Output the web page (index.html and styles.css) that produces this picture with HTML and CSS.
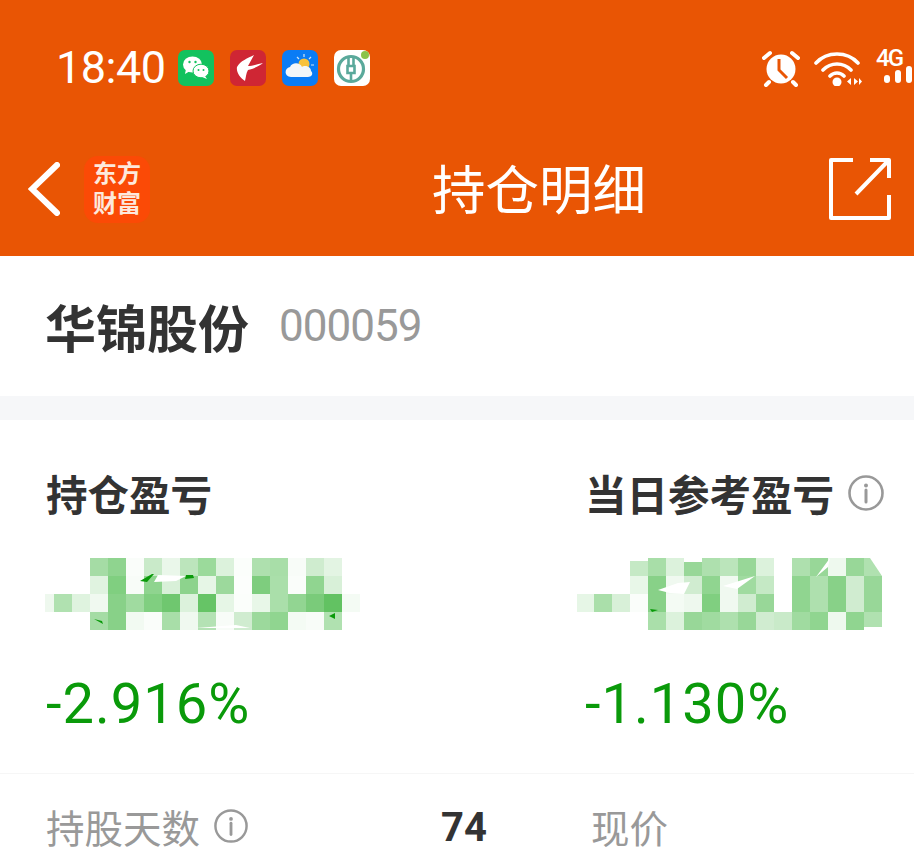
FILE: index.html
```html
<!DOCTYPE html>
<html lang="zh-CN">
<head>
  <meta charset="UTF-8">
  <meta name="viewport" content="width=device-width, initial-scale=1.0">
  <title>持仓明细</title>
  <link rel="stylesheet" href="styles.css">
</head>
<body>
  <div class="header">
    <div class="status-bar">
      <span class="time">18:40</span>
      <div class="notify-icons">
        <svg class="app-icon" viewBox="0 0 36 36"><rect width="36" height="36" rx="7" fill="#12c25e"/><ellipse cx="14.5" cy="14.5" rx="9.5" ry="8" fill="#fff"/><path d="M8 19l-1 5 5-3z" fill="#fff"/><ellipse cx="23" cy="21" rx="8" ry="6.8" fill="#fff" stroke="#12c25e"/><path d="M27 26l2 3-5-2z" fill="#fff"/><circle cx="11.5" cy="12" r="1.2" fill="#12c25e"/><circle cx="17.5" cy="12" r="1.2" fill="#12c25e"/><circle cx="20.5" cy="20" r="1" fill="#12c25e"/><circle cx="25.5" cy="20" r="1" fill="#12c25e"/></svg>
        <svg class="app-icon" viewBox="0 0 36 36"><rect width="36" height="36" rx="7" fill="#cf2634"/><path d="M24 5C18 8 10 11 7 17c-1 5 3 11 8 14 1-4 1-8 3-11 5-1 11-4 15-7-5 1-11 3-15 3 2-4 4-7 6-11z" fill="#fff"/></svg>
        <svg class="app-icon" viewBox="0 0 36 36"><rect width="36" height="36" rx="7" fill="#0a7cf5"/><circle cx="22" cy="14" r="5.5" fill="#f8c23c"/><path d="M22 4v3M29 7l-2 2M15 7l2 2M32 15h-3" stroke="#cfe6f7" stroke-width="1.2"/><path d="M9 27c-7 0-7-9-1-10 2-5 10-5 12 0 2-2 9-1 9 4 3 3 0 6-3 6z" fill="#f2f6f9"/></svg>
        <svg class="app-icon" viewBox="0 0 36 36"><rect width="36" height="36" rx="7" fill="#fff"/><circle cx="17" cy="19" r="12.5" fill="none" stroke="#5aa99b" stroke-width="3.2"/><path d="M14.5 7v9M19.5 7v9M13.5 16h7v7h-7zM17 23v8" fill="none" stroke="#5aa99b" stroke-width="2.6"/><circle cx="31" cy="5" r="4" fill="#8bc34a"/></svg>
      </div>
      <div class="system-icons">
        <svg class="alarm" viewBox="0 0 38 38"><circle cx="19" cy="20" r="14.5" fill="#fff"/><path d="M17 10v11l8 8" fill="none" stroke="#e95504" stroke-width="3"/><path d="M2 9l6-5M36 9l-6-5M7 33l-3 3M31 33l3 3" stroke="#fff" stroke-width="4" stroke-linecap="round"/></svg>
        <svg class="wifi" viewBox="0 0 48 36"><path d="M2 13C13 1 33 1 44 13M9 20c8-8 20-8 28 0M16 26c4-4 10-4 14 0" fill="none" stroke="#fff" stroke-width="3.6" stroke-linecap="round"/><circle cx="23" cy="32" r="4.5" fill="#fff"/><path d="M37 28v7l-4-3.500zM40 28v7l4-3.500zM45 28l3 3.500-3 3.500z" fill="#fff"/></svg>
        <div class="signal">
          <span class="net">4G</span>
          <div class="bars"><i class="bar-1"></i><i class="bar-2"></i><i class="bar-3"></i><i class="bar-4"></i></div>
        </div>
      </div>
    </div>
    <div class="nav-bar">
      <svg class="back" viewBox="0 0 32 54"><path d="M29 3L4 27l25 24" fill="none" stroke="#fff" stroke-width="6" stroke-linecap="round"/></svg>
      <div class="logo"><span>东方</span><span>财富</span></div>
      <h1 class="title">持仓明细</h1>
      <svg class="share" viewBox="0 0 62 62"><path d="M24 2H2v58h58V37M60 20V2H41M59 3L27 36" fill="none" stroke="#fff" stroke-width="4" stroke-linejoin="round"/></svg>
    </div>
  </div>

  <div class="stock">
    <span class="stock-name">华锦股份</span>
    <span class="stock-code">000059</span>
  </div>

  <div class="profit">
    <div class="profit-col">
      <h2>持仓盈亏</h2>
      <svg class="mosaic" width="316" height="76" viewBox="44 556 316 76">
        <g>
          <rect x="90" y="558" width="18" height="18" fill="#a5dca5"/><rect x="108" y="558" width="18" height="18" fill="#8fd48f"/><rect x="126" y="558" width="18" height="18" fill="#fafdfa"/><rect x="144" y="558" width="18" height="18" fill="#c9eac9"/><rect x="162" y="558" width="18" height="18" fill="#eaf7ea"/><rect x="180" y="558" width="18" height="18" fill="#bce5bc"/><rect x="198" y="558" width="18" height="18" fill="#9bda9b"/><rect x="216" y="558" width="18" height="18" fill="#dcf2dc"/><rect x="234" y="558" width="18" height="18" fill="#fbfefb"/><rect x="252" y="558" width="18" height="18" fill="#aee0ae"/><rect x="270" y="558" width="18" height="18" fill="#a8dea8"/><rect x="288" y="558" width="18" height="18" fill="#f8fcf8"/><rect x="306" y="558" width="18" height="18" fill="#cfeccf"/><rect x="324" y="558" width="18" height="18" fill="#e3f4e3"/>
          <rect x="90" y="576" width="18" height="18" fill="#e0f3e0"/><rect x="108" y="576" width="18" height="18" fill="#80cf80"/><rect x="126" y="576" width="18" height="18" fill="#f8fcf8"/><rect x="144" y="576" width="18" height="18" fill="#8fd48f"/><rect x="162" y="576" width="18" height="18" fill="#d8f0d8"/><rect x="180" y="576" width="18" height="18" fill="#8dd38d"/><rect x="198" y="576" width="18" height="18" fill="#e6f6e6"/><rect x="216" y="576" width="18" height="18" fill="#9cd99c"/><rect x="234" y="576" width="18" height="18" fill="#fcfefc"/><rect x="252" y="576" width="18" height="18" fill="#7ecd7e"/><rect x="270" y="576" width="18" height="18" fill="#aadfaa"/><rect x="288" y="576" width="18" height="18" fill="#fafdfa"/><rect x="306" y="576" width="18" height="18" fill="#90d590"/><rect x="324" y="576" width="18" height="18" fill="#d8f0d8"/>
          <rect x="45" y="594" width="9" height="18" fill="#eef8ee"/><rect x="54" y="594" width="18" height="18" fill="#b0e1b0"/><rect x="72" y="594" width="18" height="18" fill="#dff3df"/><rect x="90" y="594" width="18" height="18" fill="#f0f9f0"/><rect x="108" y="594" width="18" height="18" fill="#88d188"/><rect x="126" y="594" width="18" height="18" fill="#a0dba0"/><rect x="144" y="594" width="18" height="18" fill="#80cf80"/><rect x="162" y="594" width="18" height="18" fill="#6fc76f"/><rect x="180" y="594" width="18" height="18" fill="#dcf2dc"/><rect x="198" y="594" width="18" height="18" fill="#66c466"/><rect x="216" y="594" width="18" height="18" fill="#e6f6e6"/><rect x="234" y="594" width="18" height="18" fill="#fbfefb"/><rect x="252" y="594" width="18" height="18" fill="#e8f7e8"/><rect x="270" y="594" width="18" height="18" fill="#aadfaa"/><rect x="288" y="594" width="18" height="18" fill="#92d592"/><rect x="306" y="594" width="18" height="18" fill="#7acb7a"/><rect x="324" y="594" width="18" height="18" fill="#62c262"/><rect x="342" y="594" width="18" height="18" fill="#f4fbf4"/>
          <rect x="90" y="612" width="18" height="18" fill="#a5dca5"/><rect x="108" y="612" width="18" height="18" fill="#88d188"/><rect x="126" y="612" width="18" height="18" fill="#f2faf2"/><rect x="144" y="612" width="18" height="18" fill="#fafdfa"/><rect x="162" y="612" width="18" height="18" fill="#a8dea8"/><rect x="180" y="612" width="18" height="18" fill="#f0f9f0"/><rect x="198" y="612" width="18" height="18" fill="#b4e2b4"/><rect x="216" y="612" width="18" height="18" fill="#f8fcf8"/><rect x="234" y="612" width="18" height="18" fill="#d0ecd0"/><rect x="252" y="612" width="18" height="18" fill="#9cd99c"/><rect x="270" y="612" width="18" height="18" fill="#90d590"/><rect x="288" y="612" width="18" height="18" fill="#f4fbf4"/><rect x="306" y="612" width="18" height="18" fill="#f8fcf8"/><rect x="324" y="612" width="18" height="18" fill="#b0e1b0"/>
        </g>
        <path d="M152 574l-12 7 7 1 7-8zM186 575l-1 4 9-1-1-3zM94 619l9 5-1-3zM335 613l-6 3 6 3z" fill="#0a9a0a"/>
        <path d="M158 575l-4 7 22-1 10-5zM196 628l40-3 14 3z" fill="#fff"/>
      </svg>
      <div class="rate">-2.916%</div>
    </div>
    <div class="profit-col">
      <h2>当日参考盈亏<svg class="info info-lg" viewBox="0 0 36 36"><circle cx="18" cy="18" r="16.500" fill="none" stroke="#999" stroke-width="2.600"/><circle cx="18" cy="10.500" r="2" fill="#999"/><path d="M18 15v12" stroke="#999" stroke-width="3" stroke-linecap="round"/></svg></h2>
      <svg class="mosaic mosaic-right" width="310" height="76" viewBox="574 556 310 76">
        <path d="M630 576v-10l6-6 12-2h234v18z" fill="#fff"/>
        <rect x="630" y="561" width="18" height="15" fill="#c5e9c5"/><rect x="648" y="558" width="18" height="18" fill="#a8dea8"/><rect x="666" y="558" width="18" height="18" fill="#dcf2dc"/><rect x="684" y="562" width="18" height="14" fill="#98d798"/><rect x="702" y="558" width="18" height="18" fill="#aee0ae"/><rect x="720" y="558" width="18" height="18" fill="#bbe5bb"/><rect x="738" y="558" width="18" height="18" fill="#98d798"/><rect x="756" y="558" width="18" height="18" fill="#dcf2dc"/><rect x="792" y="558" width="18" height="18" fill="#aee0ae"/><rect x="810" y="558" width="18" height="18" fill="#98d798"/><rect x="828" y="558" width="18" height="18" fill="#eef9ee"/><rect x="846" y="558" width="18" height="18" fill="#98d798"/><path d="M864 558h6l12 18h-18z" fill="#b0e1b0"/>
        <rect x="630" y="576" width="18" height="18" fill="#e8f7e8"/><rect x="648" y="576" width="18" height="18" fill="#88d188"/><rect x="666" y="576" width="18" height="18" fill="#f0f9f0"/><rect x="684" y="576" width="18" height="18" fill="#d0ecd0"/><rect x="702" y="576" width="18" height="18" fill="#90d590"/><rect x="720" y="576" width="18" height="18" fill="#f0f9f0"/><rect x="738" y="576" width="18" height="18" fill="#a0dba0"/><rect x="756" y="576" width="18" height="18" fill="#c5e9c5"/><rect x="792" y="576" width="18" height="18" fill="#90d590"/><rect x="810" y="576" width="18" height="18" fill="#aee0ae"/><rect x="828" y="576" width="18" height="18" fill="#88d188"/><rect x="846" y="576" width="18" height="18" fill="#d0ecd0"/><rect x="864" y="576" width="18" height="18" fill="#98d798"/>
        <rect x="577" y="594" width="17" height="18" fill="#e6f6e6"/><rect x="594" y="594" width="18" height="18" fill="#aadfaa"/><rect x="612" y="594" width="18" height="18" fill="#d8f0d8"/><rect x="630" y="594" width="18" height="18" fill="#fafdfa"/><rect x="648" y="594" width="18" height="18" fill="#88d188"/><rect x="666" y="594" width="18" height="18" fill="#f4fbf4"/><rect x="684" y="594" width="18" height="18" fill="#eef8ee"/><rect x="702" y="594" width="18" height="18" fill="#80cf80"/><rect x="720" y="594" width="18" height="18" fill="#f0f9f0"/><rect x="738" y="594" width="18" height="18" fill="#d0ecd0"/><rect x="756" y="594" width="18" height="18" fill="#98d798"/><rect x="792" y="594" width="18" height="18" fill="#90d590"/><rect x="810" y="594" width="18" height="18" fill="#aee0ae"/><rect x="828" y="594" width="18" height="18" fill="#88d188"/><rect x="846" y="594" width="18" height="18" fill="#d0ecd0"/><rect x="864" y="594" width="18" height="18" fill="#98d798"/>
        <rect x="648" y="612" width="18" height="18" fill="#aadfaa"/><rect x="666" y="612" width="18" height="18" fill="#dcf2dc"/><rect x="684" y="612" width="18" height="18" fill="#98d798"/><rect x="702" y="612" width="18" height="18" fill="#a0dba0"/><rect x="720" y="612" width="18" height="18" fill="#aee0ae"/><rect x="738" y="612" width="18" height="18" fill="#98d798"/><rect x="756" y="612" width="18" height="18" fill="#d0ecd0"/><rect x="774" y="612" width="18" height="18" fill="#c9eac9"/><rect x="792" y="612" width="18" height="18" fill="#a0dba0"/><rect x="810" y="612" width="18" height="18" fill="#90d590"/><rect x="828" y="612" width="18" height="18" fill="#eef9ee"/><rect x="846" y="612" width="18" height="18" fill="#90d590"/><rect x="864" y="612" width="18" height="15" fill="#b0e1b0"/>
        <path d="M658 590l20-7 12-1-6 12-14-1zM723 586l32-10-18 13zM830 558l-14 19 12-10z" fill="#fff"/>
        <path d="M650 609l8 1-6 2z" fill="#0a9a0a"/>
      </svg>
      <div class="rate">-1.130%</div>
    </div>
  </div>

  <div class="stats">
    <div class="stat-item">
      <span class="stat-label">持股天数<svg class="info" viewBox="0 0 36 36"><circle cx="18" cy="18" r="16.500" fill="none" stroke="#999" stroke-width="2.600"/><circle cx="18" cy="10.500" r="2" fill="#999"/><path d="M18 15v12" stroke="#999" stroke-width="3" stroke-linecap="round"/></svg></span>
      <span class="stat-value">74</span>
    </div>
    <div class="stat-item">
      <span class="stat-label">现价</span>
    </div>
  </div>
</body>
</html>
```

FILE: styles.css
```css
* {
  box-sizing: border-box;
}

html,
body {
  height: 866px;
  overflow: hidden;
}

body {
  margin: 0;
  background: #fff;
  color: #333;
  font-family: Roboto, "Noto Sans CJK SC", sans-serif;
}

.header {
  height: 256px;
  background: #e95504;
  color: #fff;
}

.status-bar {
  display: flex;
  align-items: center;
  height: 36px;
  padding-left: 56px;
  position: relative;
  top: 50px;
}

.time {
  flex: none;
  width: 122px;
  font-size: 45px;
  line-height: 36px;
  letter-spacing: -0.5px;
}

.notify-icons {
  display: flex;
  flex: none;
  gap: 16px;
}

.app-icon {
  width: 36px;
  height: 36px;
  display: block;
}

.system-icons {
  display: flex;
  flex: none;
  align-items: center;
  margin-left: 392px;
}

.alarm {
  width: 38px;
  height: 38px;
}

.wifi {
  width: 48px;
  height: 36px;
  margin-left: 14px;
}

.signal {
  width: 40px;
  margin: 0 0 3px 14px;
  flex: none;
}

.net {
  display: block;
  font-size: 24px;
  font-weight: 500;
  line-height: 17px;
  letter-spacing: -2px;
}

.bars {
  display: flex;
  align-items: flex-end;
  gap: 5px;
  height: 25px;
  margin-top: -9px;
  padding-left: 8px;
}

.bars i {
  flex: none;
  width: 6px;
  background: #fff;
  border-radius: 3px;
}

.bar-1 { height: 8px; }
.bar-2 { height: 13px; }
.bar-3 { height: 17px; }
.bar-4 { height: 25px; }

.nav-bar {
  display: flex;
  align-items: center;
  height: 70px;
  margin-top: 118px;
  padding-left: 28px;
}

.back {
  width: 32px;
  height: 54px;
}

.logo {
  display: flex;
  flex-direction: column;
  align-items: center;
  justify-content: center;
  width: 66px;
  height: 67px;
  margin-left: 24px;
  border-radius: 14px;
  background: #fb4a06;
  font-size: 24px;
  font-weight: 700;
  line-height: 30px;
  color: #fde9dc;
}

.title {
  width: 214px;
  margin: 6px 0 0 282px;
  font-size: 53.500px;
  font-weight: 400;
  line-height: 70px;
  white-space: nowrap;
}

.share {
  width: 62px;
  height: 62px;
  margin-left: 183px;
}

.stock {
  display: flex;
  align-items: center;
  height: 164px;
  padding: 0 45px;
  border-bottom: 24px solid #f6f7f9;
}

.stock-name {
  font-size: 51px;
  font-weight: 700;
}

.stock-code {
  margin-left: 30px;
  font-size: 44px;
  letter-spacing: -1px;
  color: #999;
}

.profit {
  display: grid;
  grid-template-columns: 539px 1fr;
  height: 354px;
  padding-left: 46px;
  border-bottom: 1px solid #f6f6f6;
}

.profit-col h2 {
  display: flex;
  align-items: center;
  height: 60px;
  margin: 43px 0 0;
  font-size: 41.500px;
  font-weight: 700;
}

.mosaic {
  display: block;
  margin: 33px 0 0 -2px;
}

.mosaic-right {
  margin-left: -11px;
}

.rate {
  margin-top: 36px;
  font-size: 56px;
  line-height: 72px;
  letter-spacing: 1px;
  color: #0a9a0a;
}

.info {
  width: 34px;
  height: 34px;
  margin-left: 14px;
  flex: none;
}

.info-lg {
  width: 36px;
  height: 36px;
}

.stats {
  display: grid;
  grid-template-columns: 441px 1fr;
  column-gap: 104px;
  padding-left: 46px;
}

.stat-item {
  display: flex;
  align-items: center;
  justify-content: space-between;
  height: 107px;
  padding-bottom: 4px;
}

.stat-label {
  display: flex;
  align-items: center;
  font-size: 38.500px;
  color: #999;
}

.stat-value {
  margin-top: 4px;
  font-size: 40px;
  font-weight: 700;
}
```
